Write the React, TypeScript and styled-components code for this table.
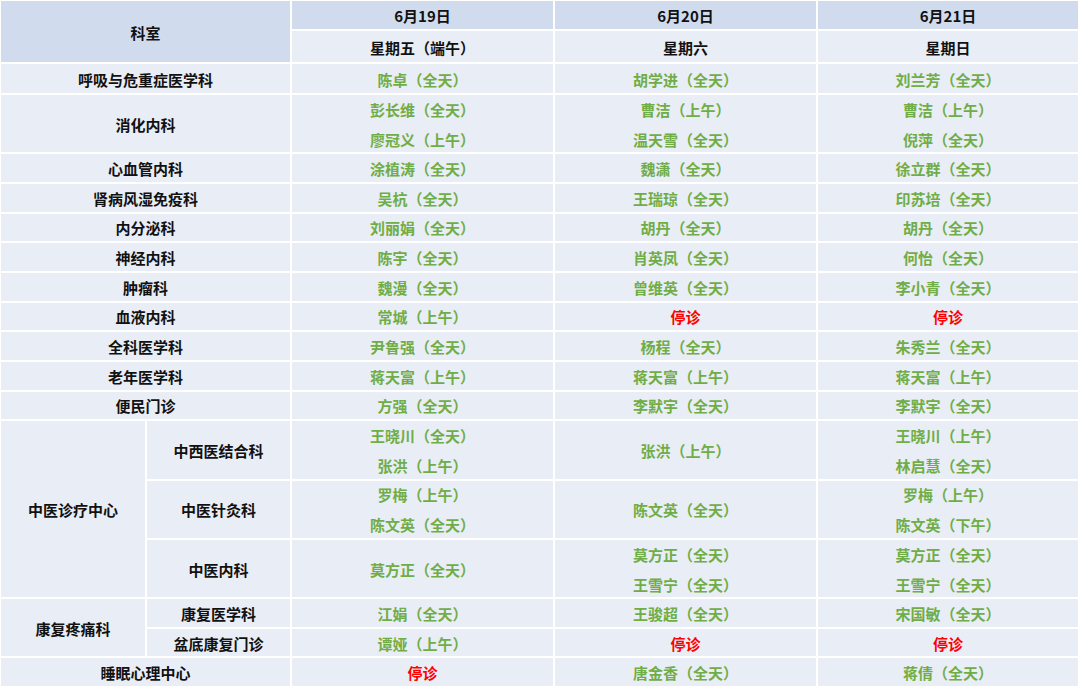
import React from "react";
import styled, { createGlobalStyle } from "styled-components";

const Global = createGlobalStyle`
  html, body { margin: 0; padding: 0; background: #ffffff; }
  body { font-family: "Noto Sans CJK SC", "Noto Sans", sans-serif; }
`;

const Grid = styled.div`
  display: grid;
  grid-template-columns: 144px 143px 261px 261px 260px;
  grid-template-rows: 28px 31px 29px repeat(20, 27.67px);
  gap: 2px;
  padding: 1px;
  width: 1080px;
  box-sizing: border-box;
  background: #ffffff;
`;

const Cell = styled.div<{ $head?: boolean; $cols?: number; $rows?: number }>`
  grid-column: span ${(p) => p.$cols ?? 1};
  grid-row: span ${(p) => p.$rows ?? 1};
  background: ${(p) => (p.$head ? "#d0dcee" : "#e9edf5")};
  display: flex;
  flex-direction: column;
  align-items: center;
  justify-content: center;
  padding-top: 2px;
  box-sizing: border-box;
  font-family: "Noto Sans CJK SC", sans-serif;
  font-size: 15px;
  font-weight: 700;
  color: #111111;
  line-height: 30px;
  white-space: nowrap;
`;

const Doc = styled.span<{ $off?: boolean }>`
  display: block;
  color: ${(p) => (p.$off ? "#ff0000" : "#70ad47")};
  line-height: 30px;
`;

type Entry = string[] | "off";

type Row = {
  dept: string;
  group?: { name: string; rows: number };
  lines: number;
  days: [Entry, Entry, Entry];
};

const rows: Row[] = [
  { dept: "呼吸与危重症医学科", lines: 1, days: [["陈卓（全天）"], ["胡学进（全天）"], ["刘兰芳（全天）"]] },
  { dept: "消化内科", lines: 2, days: [["彭长维（全天）", "廖冠义（上午）"], ["曹洁（上午）", "温天雪（全天）"], ["曹洁（上午）", "倪萍（全天）"]] },
  { dept: "心血管内科", lines: 1, days: [["涂植涛（全天）"], ["魏潇（全天）"], ["徐立群（全天）"]] },
  { dept: "肾病风湿免疫科", lines: 1, days: [["吴杭（全天）"], ["王瑞琼（全天）"], ["印苏培（全天）"]] },
  { dept: "内分泌科", lines: 1, days: [["刘丽娟（全天）"], ["胡丹（全天）"], ["胡丹（全天）"]] },
  { dept: "神经内科", lines: 1, days: [["陈宇（全天）"], ["肖英凤（全天）"], ["何怡（全天）"]] },
  { dept: "肿瘤科", lines: 1, days: [["魏漫（全天）"], ["曾维英（全天）"], ["李小青（全天）"]] },
  { dept: "血液内科", lines: 1, days: [["常城（上午）"], "off", "off"] },
  { dept: "全科医学科", lines: 1, days: [["尹鲁强（全天）"], ["杨程（全天）"], ["朱秀兰（全天）"]] },
  { dept: "老年医学科", lines: 1, days: [["蒋天富（上午）"], ["蒋天富（上午）"], ["蒋天富（上午）"]] },
  { dept: "便民门诊", lines: 1, days: [["方强（全天）"], ["李默宇（全天）"], ["李默宇（全天）"]] },
  { dept: "中西医结合科", group: { name: "中医诊疗中心", rows: 6 }, lines: 2, days: [["王晓川（全天）", "张洪（上午）"], ["张洪（上午）"], ["王晓川（上午）", "林启慧（全天）"]] },
  { dept: "中医针灸科", lines: 2, days: [["罗梅（上午）", "陈文英（全天）"], ["陈文英（全天）"], ["罗梅（上午）", "陈文英（下午）"]] },
  { dept: "中医内科", lines: 2, days: [["莫方正（全天）"], ["莫方正（全天）", "王雪宁（全天）"], ["莫方正（全天）", "王雪宁（全天）"]] },
  { dept: "康复医学科", group: { name: "康复疼痛科", rows: 2 }, lines: 1, days: [["江娟（全天）"], ["王骏超（全天）"], ["宋国敏（全天）"]] },
  { dept: "盆底康复门诊", lines: 1, days: [["谭娅（上午）"], "off", "off"] },
  { dept: "睡眠心理中心", lines: 1, days: ["off", ["唐金香（全天）"], ["蒋倩（全天）"]] },
];

const grouped = new Set(["中西医结合科", "中医针灸科", "中医内科", "康复医学科", "盆底康复门诊"]);

export default function App() {
  return (
    <>
      <Global />
      <Grid>
        <Cell $head $cols={2} $rows={2}>科室</Cell>
        <Cell $head>6月19日</Cell>
        <Cell $head>6月20日</Cell>
        <Cell $head>6月21日</Cell>
        <Cell>星期五（端午）</Cell>
        <Cell>星期六</Cell>
        <Cell>星期日</Cell>
        {rows.map((r) => (
          <React.Fragment key={r.dept}>
            {r.group && <Cell $rows={r.group.rows}>{r.group.name}</Cell>}
            <Cell $cols={grouped.has(r.dept) ? 1 : 2} $rows={r.lines}>{r.dept}</Cell>
            {r.days.map((d, i) => (
              <Cell key={i} $rows={r.lines}>
                {d === "off" ? <Doc $off>停诊</Doc> : d.map((n) => <Doc key={n}>{n}</Doc>)}
              </Cell>
            ))}
          </React.Fragment>
        ))}
      </Grid>
    </>
  );
}
